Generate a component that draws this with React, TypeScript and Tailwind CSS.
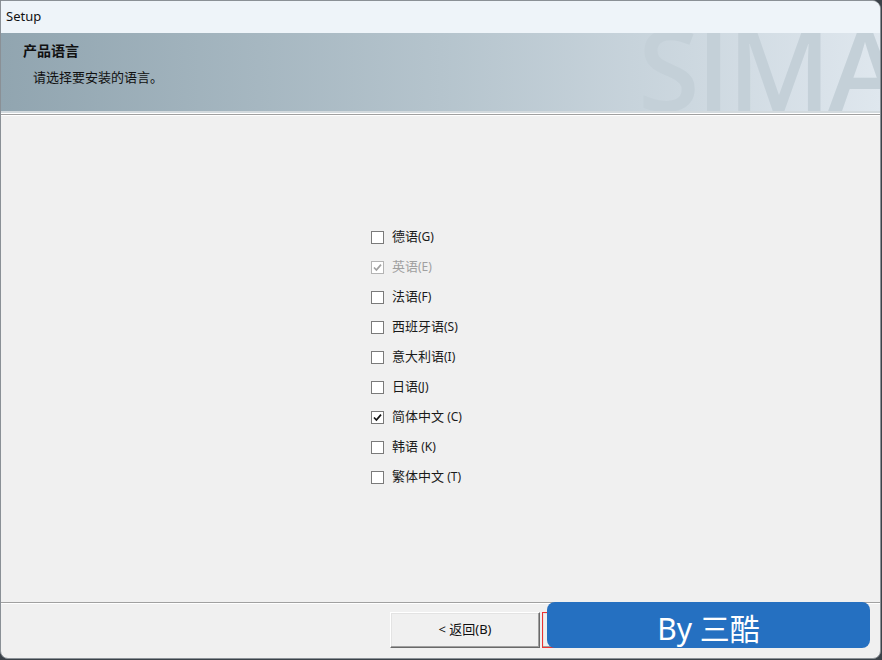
import React from "react"

const cjk = { fontFamily: '"Noto Sans", "Noto Sans CJK SC", sans-serif' }

type Lang = { label: string; key: string; checked?: boolean; disabled?: boolean }

const langs: Lang[] = [
  { label: "德语", key: "(G)" },
  { label: "英语", key: "(E)", checked: true, disabled: true },
  { label: "法语", key: "(F)" },
  { label: "西班牙语", key: "(S)" },
  { label: "意大利语", key: "(I)" },
  { label: "日语", key: "(J)" },
  { label: "简体中文", key: " (C)", checked: true },
  { label: "韩语", key: " (K)" },
  { label: "繁体中文", key: " (T)" },
]

const Box = ({ checked, disabled }: { checked?: boolean; disabled?: boolean }) => (
  <span
    className={`flex h-[13px] w-[13px] items-center justify-center border bg-white ${
      disabled ? "border-[#b4b4b4] bg-[#f4f4f4]" : "border-[#7a7a7a]"
    }`}
  >
    {checked && (
      <svg width="9" height="9" viewBox="0 0 9 9">
        <path
          d="M1 4.5 L3.4 7 L8 1.6"
          fill="none"
          stroke={disabled ? "#a0a0a0" : "#111"}
          strokeWidth="1.7"
        />
      </svg>
    )}
  </span>
)

const Row = ({ lang }: { lang: Lang }) => (
  <div className="flex h-[30px] items-center">
    <Box checked={lang.checked} disabled={lang.disabled} />
    <span
      className={`ml-[8px] text-[13px] ${lang.disabled ? "text-[#a0a0a0]" : "text-[#1a1a1a]"}`}
      style={cjk}
    >
      {lang.label}
      <span className="text-[12px]">{lang.key}</span>
    </span>
  </div>
)

const Button = ({ children, focused, className }: { children?: React.ReactNode; focused?: boolean; className?: string }) => (
  <div
    className={`flex h-[36px] items-center justify-center border ${
      focused ? "border-[#e33]" : "border-t-white border-l-white border-r-[#696969] border-b-[#696969]"
    } bg-[#f0f0f0] shadow-[inset_-1px_-1px_0_#a0a0a0,inset_1px_1px_0_#e3e3e3] ${className ?? ""}`}
  >
    {children}
  </div>
)

const App = () => (
  <div className="h-[660px] w-[882px] overflow-hidden bg-[#3b4249]">
    <div className="relative flex h-[659px] w-[881px] flex-col overflow-hidden rounded-tr-[9px] rounded-b-[8px] border border-[#8a9096] bg-[#f0f0f0]">
      {/* title bar */}
      <div className="flex h-[32px] items-center bg-[#eef4f9] pl-[5px] text-[13px] text-[#111]" style={cjk}>
        Setup
      </div>

      {/* banner */}
      <div className="relative h-[78px] overflow-hidden bg-gradient-to-r from-[#91a5b0] via-[#b5c4cd] to-[#dfe7ee]">
        <div
          className="absolute left-[637px] top-[-21px] select-none text-[112px] font-semibold leading-none tracking-[-3px] text-[#c4d0d8]"
          style={{ fontFamily: '"Open Sans", "Noto Sans", sans-serif' }}
        >
          SIMA
        </div>
        <div className="relative pl-[22px] pt-[9px]" style={cjk}>
          <div className="text-[14px] font-bold leading-[18px] text-[#111]">产品语言</div>
          <div className="mt-[8px] pl-[10px] text-[13px] leading-[18px] text-[#111]">请选择要安装的语言。</div>
        </div>
      </div>
      <div className="h-[2px] bg-[#d3dade]" />
      <div className="h-[1px] bg-white" />
      <div className="h-[1px] bg-[#a0a0a0]" />
      <div className="h-[1px] bg-white" />

      {/* content */}
      <div className="flex flex-1 flex-col pl-[370px] pt-[106px]">
        {langs.map((l) => (
          <Row key={l.label} lang={l} />
        ))}
      </div>

      {/* footer */}
      <div className="h-[1px] bg-[#a0a0a0]" />
      <div className="h-[1px] bg-white" />
      <div className="relative flex h-[54px] items-start pl-[389px] pt-[8px]">
        <Button className="w-[150px]">
          <span className="text-[13px] text-[#111]" style={cjk}>
            &lt; 返回(B)
          </span>
        </Button>
        <Button focused className="ml-[2px] w-[154px]" />
        <Button className="ml-[8px] w-[150px]" />

        <div
          className="absolute left-[546px] top-[-2px] flex h-[46px] w-[323px] items-center justify-center rounded-[8px] bg-[#2570c1] pt-[6px] text-[30px] text-white"
          style={cjk}
        >
          By 三酷
        </div>
      </div>
    </div>
  </div>
)

export default App
